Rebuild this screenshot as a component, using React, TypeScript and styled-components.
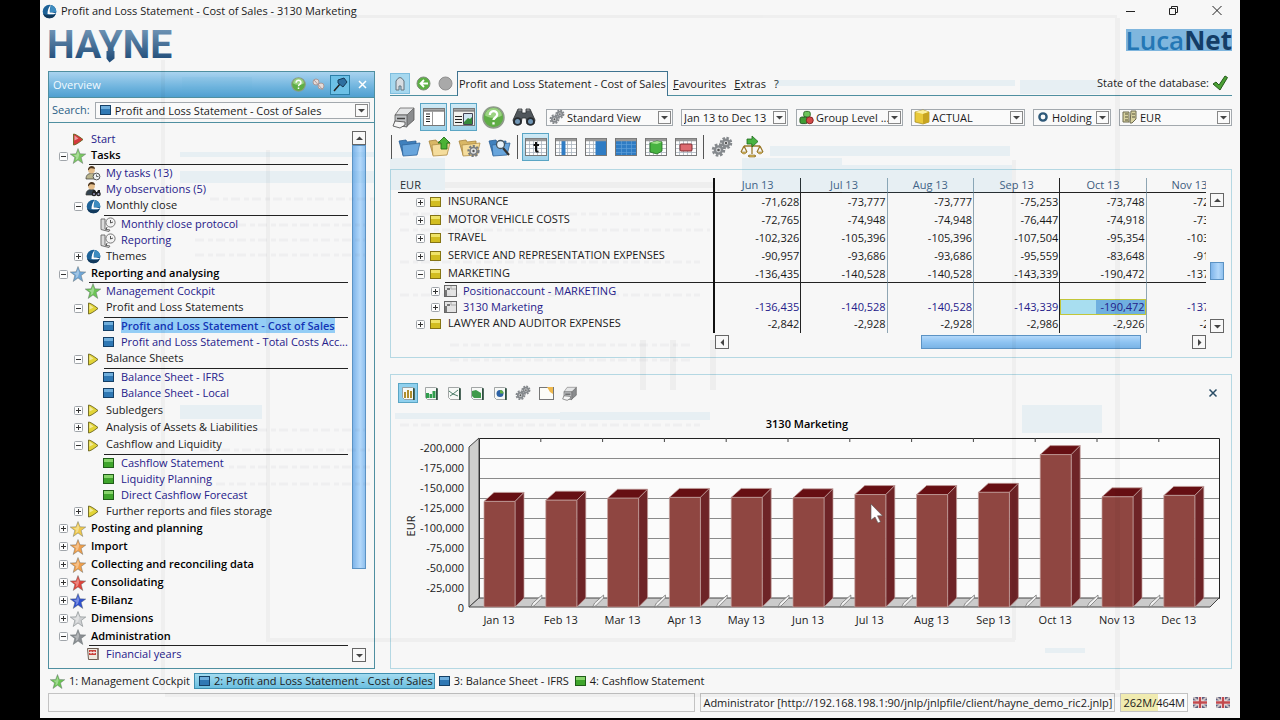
import React from "react";
import styled, { createGlobalStyle, css } from "styled-components";

const GlobalStyle = createGlobalStyle`
  * { box-sizing: border-box; }
  body { margin: 0; background: #000; }
  body, button, select, input {
    font-family: "Open Sans", "Noto Sans", sans-serif;
    font-size: 11px;
    line-height: 16px;
    color: #1a1a1a;
  }
  button { border: 0; padding: 0; background: none; }
  a { color: inherit; text-decoration: none; }
  svg { display: block; flex: none; }
`;

const TEAL = "#4f8fa0";
const PALE = "#b5d8e3";
const LINK = "#25208a";

/* ---------- frame ---------- */

const Stage = styled.div`
  min-height: 100vh;
  padding: 0 40px 2px;
  display: flex;
  background: #000;
`;
const Window = styled.div`
  position: relative;
  flex: 1;
  min-width: 0;
  display: flex;
  flex-direction: column;
  background: #f7f7f7;
`;
const TitleBar = styled.header`
  height: 22px;
  display: flex;
  align-items: center;
  gap: 4px;
  padding: 0 16px 0 2px;
`;
const Title = styled.h1`
  margin: 0;
  flex: 1;
  font-size: 11px;
  font-weight: 400;
`;
const WindowButtons = styled.div`
  display: flex;
  gap: 30px;
`;
const WindowButton = styled.button`
  width: 13px;
  height: 13px;
`;
const BrandRow = styled.div`
  height: 49px;
  display: flex;
  justify-content: space-between;
  align-items: flex-start;
  padding: 7px 8px 0;
`;
const LucaNet = styled.div`
  height: 22px;
  background: #7fb6de;
  color: #2477b5;
  font-size: 26px;
  font-weight: 600;
  line-height: 22px;
  b { color: #143d66; font-weight: 700; }
`;
const Body = styled.main`
  flex: 1;
  display: grid;
  grid-template-columns: 327px minmax(0, 1fr);
  gap: 15px;
  padding: 0 8px;
`;

/* ---------- overview panel ---------- */

const Overview = styled.aside`
  display: flex;
  flex-direction: column;
  border: 1px solid ${TEAL};
`;
const OverviewHead = styled.div`
  height: 26px;
  display: flex;
  align-items: center;
  gap: 4px;
  padding: 0 4px;
  color: #f2faff;
  background: linear-gradient(#a9d3ef, #6fb4de 60%, #4f9fd0);
  border-bottom: 1px solid ${TEAL};
`;
const HeadTitle = styled.h2`
  margin: 0;
  flex: 1;
  font-size: 11px;
  font-weight: 400;
`;
const HeadButton = styled.button<{ $on?: boolean }>`
  width: ${(p) => (p.$on ? 20 : 16)}px;
  height: 20px;
  display: flex;
  align-items: center;
  justify-content: center;
  ${(p) => p.$on && css`border: 1px solid #2b7fa8; background: #6cc0e6;`}
`;
const SearchRow = styled.div`
  height: 25px;
  display: flex;
  align-items: center;
  gap: 5px;
  padding: 0 4px 0 3px;
  color: #2b5f86;
  border-bottom: 1px solid ${TEAL};
`;
const TreeArea = styled.div`
  flex: 1;
  display: flex;
  gap: 4px;
  padding: 8px 8px 6px 0;
`;
const Tree = styled.ul`
  flex: 1;
  min-width: 0;
  margin: 0;
  padding: 0;
  list-style: none;
  display: flex;
  flex-direction: column;
  justify-content: space-between;
`;
const TreeRow = styled.li<{ $level: number; $height: number }>`
  height: ${(p) => p.$height}px;
  display: flex;
  align-items: center;
  padding-left: ${(p) => 10 + p.$level * 15}px;
`;
const Toggle = styled.button`
  width: 9px;
  height: 9px;
  flex: none;
`;
const ToggleSlot = styled.span`
  width: 9px;
  flex: none;
`;
const IconSlot = styled.span`
  width: 16px;
  margin: 0 3px 0 2px;
  display: flex;
  justify-content: center;
  flex: none;
`;
const TreeLabel = styled.span<{ $open?: boolean; $bold?: boolean; $leaf: boolean }>`
  flex: 1;
  min-width: 0;
  height: 100%;
  padding-left: 2px;
  overflow: hidden;
  white-space: nowrap;
  font-weight: ${(p) => (p.$bold ? 600 : 400)};
  color: ${(p) => (p.$leaf ? LINK : p.$bold ? "#000" : "#1a1a1a")};
  border-bottom: ${(p) => (p.$open ? "1px solid #222" : "0")};
`;
const Selected = styled.a`
  font-weight: 600;
  color: #1335b5;
  background: #94cdf5;
`;

/* ---------- scroll bars ---------- */

const VScroll = styled.div`
  width: 14px;
  display: flex;
  flex-direction: column;
  flex: none;
`;
const ScrollButton = styled.button`
  width: 14px;
  height: 14px;
  flex: none;
  border: 1px solid #666;
  background: #f8f8f8;
  display: flex;
  align-items: center;
  justify-content: center;
`;
const VThumb = styled.div<{ $size: number }>`
  flex: ${(p) => p.$size} 0 0;
  border: 1px solid #5c93c4;
  background: linear-gradient(90deg, #7fb5ea, #b3d8fa 60%, #8fc0ee);
`;
const VRest = styled.div<{ $size: number }>`
  flex: ${(p) => p.$size} 0 0;
`;

/* ---------- combo boxes ---------- */

const ComboBox = styled.label<{ $width?: number }>`
  height: 17px;
  ${(p) => (p.$width ? css`width: ${p.$width}px;` : css`flex: 1;`)}
  min-width: 0;
  display: flex;
  align-items: center;
  gap: 2px;
  padding: 0 1px 0 2px;
  border: 1px solid #a3a9ae;
  background: #fafafa;
`;
const ComboSelect = styled.select`
  flex: 1;
  min-width: 0;
  height: 15px;
  padding: 0;
  border: 0;
  line-height: 15px;
  background: transparent;
  appearance: none;
`;
const ComboArrow = styled.span`
  width: 13px;
  height: 13px;
  margin-left: -2px;
  border: 1px solid #888;
  display: flex;
  align-items: center;
  justify-content: center;
  flex: none;
`;

/* ---------- workspace ---------- */

const Workspace = styled.section`
  min-width: 0;
  display: flex;
  flex-direction: column;
`;
const MenuRow = styled.nav`
  height: 25px;
  display: flex;
  align-items: stretch;
`;
const MenuGroup = styled.div<{ $grow?: boolean }>`
  ${(p) => p.$grow && css`flex: 1;`}
  display: flex;
  align-items: center;
  border-bottom: 1px solid ${TEAL};
`;
const NavButtons = styled(MenuGroup)`
  width: 67px;
  gap: 6px;
`;
const RoundButton = styled.button`
  width: 16px;
  height: 16px;
`;
const MarkButton = styled.button`
  width: 20px;
  height: 21px;
  border: 1px solid #7fbede;
  background: #a6d8ef;
  display: flex;
  align-items: center;
  justify-content: center;
`;
const ActiveTab = styled.a`
  width: 211px;
  padding: 4px 0 0 1px;
  white-space: nowrap;
  border: 1px solid #3f7390;
  border-bottom: 0;
`;
const MenuLink = styled.a`
  display: inline-block;
  margin: 0 3px 0 5px;
  padding-top: 1px;
  &::first-letter { text-decoration: underline; }
`;
const MenuHelp = styled.button`
  margin-left: 5px;
  padding-top: 1px;
`;
const DbState = styled.span`
  margin-left: auto;
  display: flex;
  align-items: center;
  gap: 3px;
  padding-right: 4px;
`;
const Toolbar = styled.div<{ $top: number }>`
  height: 28px;
  margin-top: ${(p) => p.$top}px;
  display: flex;
  align-items: center;
  gap: 3px;
`;
const ToolButton = styled.button<{ $on?: boolean }>`
  width: 27px;
  height: 28px;
  flex: none;
  display: flex;
  align-items: center;
  justify-content: center;
  ${(p) => p.$on && css`border: 1px solid #5aa5c4; background: linear-gradient(#cfeaf6, #9fd2ea);`}
`;
const Divider = styled.span`
  width: 1px;
  height: 24px;
  margin: 0 1px;
  background: #555;
`;
const Combos = styled.div`
  flex: 1;
  min-width: 0;
  display: flex;
  gap: 8px;
  margin-left: 6px;
`;

/* ---------- figures table ---------- */

const FiguresPanel = styled.section`
  margin-top: 8px;
  padding: 8px 7px;
  border: 1px solid ${PALE};
`;
const FiguresTop = styled.div`
  display: flex;
  gap: 4px;
`;
const TableClip = styled.div`
  flex: 1;
  min-width: 0;
  overflow: hidden;
`;
const Figures = styled.table`
  width: 835px;
  table-layout: fixed;
  border-collapse: separate;
  border-spacing: 0;
`;
const HeadCell = styled.th<{ $first?: boolean; $dark?: boolean }>`
  height: 15px;
  padding: 0 2px;
  font-weight: 400;
  line-height: 14px;
  text-align: ${(p) => (p.$first ? "left" : "center")};
  color: ${(p) => (p.$first ? "#222" : "#3c5a7d")};
  border-bottom: 1px solid #222;
  border-right: ${(p) => (p.$first ? "2px solid #111" : p.$dark ? "1px solid #222" : "1px solid #8ea5b3")};
`;
const Cell = styled.td<{ $dark?: boolean; $link?: boolean; $line?: boolean; $hit?: boolean; $h: number }>`
  height: ${(p) => p.$h}px;
  padding: 0 1px 0 0;
  line-height: 14px;
  text-align: right;
  color: ${(p) => (p.$link ? LINK : "#1a1a1a")};
  border-right: 1px solid ${(p) => (p.$dark ? "#222" : "#8ea5b3")};
  border-bottom: ${(p) => (p.$line ? "1px solid #222" : "0")};
  ${(p) => p.$hit && css`
    background: linear-gradient(90deg, #a8def0 42%, #6fb0e0 42%);
    box-shadow: inset 0 0 0 1px #c2c63a;
  `}
`;
const NameCell = styled.th<{ $h: number }>`
  height: ${(p) => p.$h}px;
  padding: 0;
  font-weight: 400;
  text-align: left;
  border-right: 2px solid #111;
`;
const NameLine = styled.div<{ $level: number }>`
  height: 100%;
  display: flex;
  align-items: center;
  padding-left: ${(p) => 18 + p.$level * 15}px;
`;
const NameText = styled.span<{ $line?: boolean; $link?: boolean }>`
  flex: 1;
  height: 100%;
  padding-left: 3px;
  line-height: 16px;
  white-space: nowrap;
  color: ${(p) => (p.$link ? LINK : "#1a1a1a")};
  border-bottom: ${(p) => (p.$line ? "1px solid #222" : "0")};
`;
const NameIcon = styled.span`
  width: 18px;
  margin: 0 1px;
  display: flex;
  justify-content: center;
`;
const SideScroll = styled(VScroll)`
  margin-top: 15px;
`;
const HScroll = styled.div`
  height: 14px;
  margin: 2px 18px 0 317px;
  display: flex;
`;
const HRest = styled.div<{ $size: number }>`
  flex: ${(p) => p.$size} 0 0;
`;
const HThumb = styled.div`
  flex: 219 0 0;
  border: 1px solid #5c93c4;
  background: linear-gradient(#b3d8fa, #8fc4f2 50%, #7ab4e6);
`;

/* ---------- chart ---------- */

const ChartPanel = styled.section`
  flex: 1;
  margin-top: 16px;
  border: 1px solid ${PALE};
`;
const ChartTools = styled.div`
  height: 36px;
  display: flex;
  align-items: center;
  gap: 3px;
  padding: 0 12px 0 7px;
`;
const ChartTool = styled.button<{ $on?: boolean }>`
  width: 20px;
  height: 20px;
  display: flex;
  align-items: center;
  justify-content: center;
  ${(p) => p.$on && css`border: 1px solid #5aa5c4; background: #8fd0ee;`}
`;
const ChartClose = styled.button`
  width: 12px;
  height: 12px;
  margin-left: auto;
`;
const ChartTitle = styled.h2`
  margin: 5px 8px 0 0;
  font-size: 11px;
  font-weight: 600;
  color: #000;
  text-align: center;
`;
const ChartSvg = styled.svg`
  width: 100%;
  height: auto;
`;

/* ---------- bottom ---------- */

const OpenTabs = styled.nav`
  height: 24px;
  display: flex;
  align-items: center;
  gap: 2px;
  padding: 0 8px;
`;
const OpenTab = styled.a<{ $on?: boolean }>`
  height: 16px;
  display: flex;
  align-items: center;
  gap: 4px;
  padding: 0 1px;
  line-height: 14px;
  white-space: nowrap;
  border: 1px solid transparent;
  ${(p) => p.$on && css`padding: 0 1px 0 4px; border-color: #3f8fb0; background: linear-gradient(#a3dbf0, #6bbfe0);`}
`;
const StatusBar = styled.footer`
  height: 25px;
  display: flex;
  align-items: flex-start;
  gap: 5px;
  padding: 0 10px 0 8px;
`;
const StatusBox = styled.div<{ $grow?: boolean; $memory?: boolean }>`
  height: 19px;
  padding: 0 2px;
  line-height: 18px;
  white-space: nowrap;
  border: 1px solid #c3c3c3;
  ${(p) => p.$grow && css`flex: 1;`}
  ${(p) => p.$memory && css`background: linear-gradient(90deg, #f0ebb0 56%, #fbfbfb 56%);`}
`;
const Flags = styled.div`
  height: 19px;
  display: flex;
  align-items: center;
  gap: 9px;
`;
const Residue = styled.svg`
  position: absolute;
  inset: 0;
  width: 100%;
  height: 100%;
  pointer-events: none;
`;

/* ---------- icons ---------- */

const Star = ({ c, s = 16 }: { c: string; s?: number }) => (
  <svg width={s} height={s} viewBox="0 0 16 16">
    <path d="M8 .5l2 5.300 5.800.2-4.600 3.500L12.800 15.500 8 12 3.200 15.500l1.600-6L.2 6 6 5.800z" fill={c} stroke="#5a6266" strokeOpacity=".6" strokeWidth=".7" />
    <path d="M8 2.800l1.200 4-1.200 4-2.300 1.400.6-3L3.600 7l2.900-.2z" fill="#fff" opacity=".35" />
  </svg>
);
const Play = ({ c }: { c: string }) => (
  <svg width="14" height="13" viewBox="0 0 14 13">
    <path d="M2.500 1Q5 1 12 6.500 5 12 2.500 12z" fill={c} stroke="#6b6420" strokeWidth=".9" />
    <path d="M3.500 2.500l4 3-4 2z" fill="#fff" opacity=".5" />
  </svg>
);
const Square = ({ c, w = 11 }: { c: "blue" | "green" | "yellow"; w?: number }) => {
  const tones = { blue: ["#7fbbe6", "#2f78b4", "#143f66"], green: ["#9ae07c", "#3fa52c", "#1f5d18"], yellow: ["#f6ec7a", "#d2bd20", "#857414"] }[c];
  return (
    <svg width={w} height="10" viewBox="0 0 11 10">
      <rect x=".5" y=".5" width="10" height="9" fill={tones[1]} stroke={tones[2]} />
      <rect x="1" y="1" width="9" height="3" fill={tones[0]} opacity=".8" />
    </svg>
  );
};
const Luca = () => (
  <svg width="15" height="15" viewBox="0 0 15 15">
    <circle cx="7.500" cy="7.500" r="6.800" fill="#1d6298" />
    <path d="M9 .9A6.800 6.800 0 0 1 14.200 8.500C12 8 9.500 8 8 8.300 8 5.500 8.200 3 9 .9z" fill="#3e8cc0" />
    <path d="M1 9.500A6.800 6.800 0 0 0 13.800 10C9 11.500 4 11.500 1 9.500z" fill="#12395c" />
    <path d="M9 .8C6.500 3.500 5.500 6.500 5.500 10c3 .6 6 .4 8.500-.6C11.500 8.600 9.500 8.500 7.800 8.600 7.600 5.800 8 3 9 .8z" fill="#fff" />
  </svg>
);
const Person = ({ badge }: { badge: "clock" | "binoculars" }) => (
  <svg width="16" height="16" viewBox="0 0 16 16">
    <path d="M1 14c0-4 2-5.500 5.500-5.500S11 10 11 14z" fill={badge === "clock" ? "#b9b48c" : "#33424e"} stroke="#3b3b33" strokeWidth=".7" />
    <circle cx="6.500" cy="5" r="3.400" fill="#e4bd8a" />
    <path d="M3 5c-.3-5 7-5.500 7-1C8 3 6 3 5 3.500 4 4 4 6 3 5z" fill="#4a3520" />
    {badge === "clock" ? (
      <g><circle cx="11.500" cy="11.500" r="3.400" fill="#eef2f5" stroke="#555" /><path d="M11.500 9.500v2h2" fill="none" stroke="#444" strokeWidth=".8" /></g>
    ) : (
      <g fill="#222"><circle cx="9" cy="13" r="2.300" /><circle cx="13.500" cy="13" r="2.300" /><path d="M8 9h2l1 2h1l1-2h2v4H7z" /><circle cx="9" cy="13" r="1" fill="#99b" /><circle cx="13.500" cy="13" r="1" fill="#99b" /></g>
    )}
  </svg>
);
const Protocol = () => (
  <svg width="16" height="15" viewBox="0 0 16 15">
    <path d="M1 2h4v10l5 1-1 1.500-8-2z" fill="#dcdcdc" stroke="#666" strokeWidth=".9" />
    <circle cx="10.500" cy="5.500" r="4.600" fill="#f3f3f3" stroke="#777" />
    <path d="M10.500 3v3l2.500-1M7 10l-1 3" fill="none" stroke="#555" />
  </svg>
);
const Calendar = () => (
  <svg width="14" height="14" viewBox="0 0 14 14">
    <path d="M1.500 1.500h11v11h-10z" fill="#efe9df" stroke="#6d5e54" />
    <path d="M3 3h7v5H3z" fill="#c8413a" /><path d="M5 4v3M8 4v3M3 5.500h7" stroke="#fff" strokeWidth=".8" />
    <path d="M11 2v11l2-1V2z" fill="#8d7f77" />
  </svg>
);
const Help = ({ s }: { s: number }) => (
  <svg width={s} height={s} viewBox="0 0 22 22">
    <circle cx="11" cy="11" r="10" fill="#5fae45" stroke="#8e9b8a" strokeWidth="1.500" />
    <path d="M3 9a8 7 0 0 1 16 0c-4 3-12 3-16 0z" fill="#b6e39c" opacity=".7" />
    <path d="M7.500 8.500c0-5 7.500-4.500 7 0-.3 2.500-3.500 2.500-3.500 5M11 15.500v2.200" fill="none" stroke="#fff" strokeWidth="2.200" />
  </svg>
);
const Arrow = ({ d }: { d: "up" | "down" | "left" | "right" }) => (
  <svg width="7" height="7" viewBox="0 0 7 7">
    <path d={{ up: "M0 5h7L3.500 1.500z", down: "M0 2h7L3.500 5.500z", left: "M5 0v7L1.500 3.500z", right: "M2 0v7l3.500-3.500z" }[d]} fill="#444" />
  </svg>
);
const ToggleBox = ({ open }: { open?: boolean }) => (
  <svg width="9" height="9" viewBox="0 0 9 9">
    <rect x=".5" y=".5" width="8" height="8" rx="1" fill="#fdfdfd" stroke="#a0a5aa" />
    <path d={open ? "M2 4.500h5" : "M2 4.500h5M4.500 2v5"} stroke="#333" />
  </svg>
);
const Gears = ({ s = 22 }: { s?: number }) => (
  <svg width={s} height={s} viewBox="0 0 22 22" fill="none">
    <circle cx="7.500" cy="14" r="5.500" stroke="#85898d" strokeWidth="2.500" strokeDasharray="2.600 1.700" />
    <circle cx="7.500" cy="14" r="3.600" fill="#d3d6d8" stroke="#85898d" strokeWidth="2.400" />
    <circle cx="7.500" cy="14" r="1.300" fill="#555" />
    <circle cx="15" cy="7" r="5" stroke="#85898d" strokeWidth="2.500" strokeDasharray="2.400 1.500" />
    <circle cx="15" cy="7" r="3.300" fill="#e0e2e4" stroke="#85898d" strokeWidth="2.400" />
    <circle cx="15" cy="7" r="1.200" fill="#555" />
  </svg>
);
const Printer = ({ s = 23 }: { s?: number }) => (
  <svg width={s} height={s} viewBox="0 0 23 23">
    <path d="M14 9l8-7v12l-8 7z" fill="#8a8c8e" stroke="#555" strokeWidth=".8" />
    <path d="M8 2h14l-7 7H3z" fill="#e4e5e6" stroke="#666" strokeWidth=".8" />
    <path d="M3 9h12v12l-12-2z" fill="#bfc1c3" stroke="#555" strokeWidth=".8" />
    <path d="M5 12.500h8" stroke="#444" strokeWidth="1.500" />
    <path d="M3 15l10 1v3l-5 3-7-2z" fill="#f6f6f6" stroke="#555" strokeWidth=".9" />
  </svg>
);
const Folder = ({ c = "blue", mark }: { c?: "blue" | "tan"; mark?: "up" | "gear" | "lens" }) => (
  <svg width="23" height="22" viewBox="0 0 23 22">
    <path d="M1 5l7-1 1 2 9-1v5L5 19z" fill={c === "blue" ? "#3f80bd" : "#d9b765"} stroke={c === "blue" ? "#2b5f95" : "#a8843c"} strokeWidth=".8" />
    <path d="M4 9l18-2-3 12-14 1z" fill={c === "blue" ? "#68a5dc" : "#f5dd9d"} stroke={c === "blue" ? "#2f659c" : "#b08d45"} strokeWidth=".8" />
    {mark === "up" && <path d="M16 1l6 6h-3v6h-6V7h-3z" fill="#4cb235" stroke="#23701a" strokeWidth=".9" />}
    {mark === "gear" && <g fill="none"><circle cx="15.500" cy="15" r="5" stroke="#777b7f" strokeWidth="2.200" strokeDasharray="2.200 1.500" /><circle cx="15.500" cy="15" r="3.500" fill="#dfe1e3" stroke="#777b7f" strokeWidth="1.500" /><circle cx="15.500" cy="15" r="1.200" fill="#555" /></g>}
    {mark === "lens" && <g><path d="M15 12l6 7" stroke="#333" strokeWidth="2.200" /><circle cx="12.500" cy="8.500" r="4" fill="#e8f3fb" stroke="#44545f" strokeWidth="1.300" /></g>}
  </svg>
);
const Grid = ({ kind }: { kind: "t" | "column" | "half" | "full" | "cube" | "cell" }) => (
  <svg width="22" height="20" viewBox="0 0 22 20">
    <rect x=".5" y="1.500" width="21" height="17" fill="#fdfdfd" stroke="#777" />
    <path d="M1 7.500h20M1 11.500h20M1 15.500h20M4.500 4v14M8.500 4v14M12.500 4v14M16.500 4v14" stroke="#a9b4be" strokeWidth=".8" />
    {kind === "column" && <path d="M6.500 3h4v15h-4z" fill="#2f7cc4" />}
    {kind === "half" && <path d="M10.500 3H21v15H10.500z" fill="#2f7cc4" />}
    {kind === "full" && <path d="M1 3h20v15H1z" fill="#2f7cc4" />}
    {kind === "full" && <path d="M1 7.500h20M1 11.500h20M1 15.500h20M6.500 4v14M11.500 4v14M16.500 4v14" stroke="#5f9fd8" strokeWidth=".7" />}
    <path d="M1 3h20" stroke="#999" strokeWidth="2.500" />
    {kind === "t" && <path d="M11 5v8.500q0 1.500 2.500 1M8.500 8H14" fill="none" stroke="#111" strokeWidth="2" />}
    {kind === "cube" && <g><path d="M5 6l7-2 5 1v9l-5 3-7-2z" fill="#48b341" stroke="#1f6b1d" strokeWidth=".8" /><path d="M5 6l7 1 5-2-5-1z" fill="#a3e28f" /></g>}
    {kind === "cell" && <rect x="5" y="7" width="12" height="7" rx="1" fill="#dd6a70" stroke="#7d2a2e" />}
  </svg>
);
const PaneIcon = ({ picture }: { picture?: boolean }) => (
  <svg width="22" height="20" viewBox="0 0 22 20">
    <rect x=".5" y="1.500" width="21" height="17" fill={picture ? "#f2f2ee" : "#fff"} stroke="#777" />
    <path d="M1 3.500h20" stroke="#888" strokeWidth="2.500" />
    <path d={picture ? "M2 9.500h7M2 12.500h7M2 15.500h7" : "M3 7h4M3 9.500h4M3 12h4M3 14.500h4"} stroke="#222" strokeWidth="1.200" />
    {picture ? <g><path d="M10.500 6.500h9v11h-9z" fill="#cfe4f1" stroke="#445" /><path d="M11 15l4-4 2 1 2-2v7h-8z" fill="#358a3c" /></g> : <path d="M9.500 4v14" stroke="#999" />}
  </svg>
);
const Binoculars = () => (
  <svg width="24" height="22" viewBox="0 0 24 22">
    <path d="M6 3h4v4h4V3h4l5 11-1 4h-7l-1-6h-4l-1 6H2l-1-4z" fill="#50565b" stroke="#2a2d30" strokeWidth=".8" />
    <circle cx="5.500" cy="15.500" r="4.300" fill="#272b2f" /><circle cx="18.500" cy="15.500" r="4.300" fill="#272b2f" />
    <circle cx="5.500" cy="15.500" r="2.500" fill="#7196b5" /><circle cx="18.500" cy="15.500" r="2.500" fill="#7196b5" />
    <path d="M6.500 4h3M14.500 4h3" stroke="#aaa" />
  </svg>
);
const Scales = () => (
  <svg width="24" height="24" viewBox="0 0 24 24" fill="none">
    <path d="M12 8v11M4 11h16M8 21h8M4 11L1 17M4 11l3 6M20 11l-3 6M20 11l3 6" stroke="#9b7a2c" strokeWidth="1.300" />
    <path d="M1 17h6q-3 4-6 0zM17 17h6q-3 4-6 0zM9 20h6v2H9z" fill="#d8b95e" stroke="#8b6b22" strokeWidth=".6" />
    <path d="M7 4h5V1l6 5.500-6 5.500V9H7z" fill="#48b341" stroke="#1f6b1d" strokeWidth=".8" />
  </svg>
);
const Cubes = () => (
  <svg width="15" height="15" viewBox="0 0 16 15">
    <rect x="5" y="1" width="7" height="6" rx="2" fill="#6cc45a" stroke="#2c6b25" />
    <rect x="1" y="7" width="8" height="7" rx="2" fill="#3f9d35" stroke="#24551f" />
    <circle cx="11.500" cy="10.500" r="3.700" fill="#d34a48" stroke="#7d2322" />
  </svg>
);
const YellowCube = () => (
  <svg width="16" height="16" viewBox="0 0 16 16">
    <path d="M1 3l8-2 6 2v10l-6 2-8-2z" fill="#e9c93a" stroke="#9c8420" strokeWidth=".7" />
    <path d="M1 3l8 2 6-2-6-2z" fill="#fbf0a0" /><path d="M9 5l6-2v10l-6 2z" fill="#c7a421" />
  </svg>
);
const Ring = () => (
  <svg width="14" height="12" viewBox="0 0 14 12"><circle cx="7" cy="6" r="3.600" fill="none" stroke="#2d5878" strokeWidth="2.400" /></svg>
);
const Money = () => (
  <svg width="16" height="14" viewBox="0 0 16 14">
    <path d="M1 2h6v10H1zM9 1h5v8l-4 4H8z" fill="#d8d2a0" stroke="#6d6a50" /><path d="M3 4h3M3 7h3M3 10h3M10 4h3M10 7h3" stroke="#55523d" />
  </svg>
);
const ChartIcon = ({ kind }: { kind: "bars" | "bars2" | "line" | "area" | "pie" | "note" }) => (
  <svg width="15" height="15" viewBox="0 0 15 15">
    {kind === "note" ? (
      <g><rect x=".5" y="1.500" width="14" height="12" fill="#fdfdf8" stroke="#777" /><path d="M8 1h6v7l-3-2z" fill="#f0b94c" /></g>
    ) : (
      <g>
        <path d="M1.500 1.500h10l2 1v11h-10l-2-2z" fill="#f7f9f7" stroke="#8b9191" strokeWidth=".8" />
        <path d="M12 2v12h1.700V2.500z" fill="#2f5141" />
        {kind === "bars" && <path d="M3 6h2v6H3zM6 4h2v8H6zM9 5h2v7H9z" fill="#b08e2c" />}
        {kind === "bars2" && <path d="M2 7h3v5H2zM5.500 8H8v4H5.500zM8.500 5h3v7h-3z" fill="#2f9d4d" />}
        {kind === "line" && <path d="M2 5l4 3 5-4M3 10l3-2 5 2" fill="none" stroke="#4b7d69" />}
        {kind === "area" && <path d="M2 5l4-1 5 3v5H4L2 10z" fill="#3f9a4a" />}
        {kind === "pie" && <g><circle cx="7" cy="7.500" r="3.500" fill="#2d62a5" /><path d="M7 7.500V4a3.500 3.500 0 0 1 3.500 3.500z" fill="#5fae45" /></g>}
      </g>
    )}
  </svg>
);
const AccountIcon = () => (
  <svg width="13" height="12" viewBox="0 0 13 12">
    <rect x=".5" y=".5" width="12" height="11" fill="#e3e3e3" stroke="#666" /><path d="M1 5h2v6H1zM3 3h3v2H3z" fill="#777" /><path d="M7 1v3h5" stroke="#aaa" fill="none" />
  </svg>
);
const Flag = () => (
  <svg width="14" height="11" viewBox="0 0 14 11">
    <rect width="14" height="11" fill="#5b5f80" /><path d="M0 0l14 11M14 0L0 11" stroke="#c9bfc0" strokeWidth="2" />
    <path d="M7 0v11M0 5.500h14" stroke="#f4eeee" strokeWidth="4" /><path d="M7 0v11M0 5.500h14" stroke="#c24a4e" strokeWidth="2.400" />
  </svg>
);

/* ---------- data ---------- */

type Node = { t: string; l: number; i: React.ReactNode; kind: "leaf" | "open" | "closed"; sel?: boolean };
const leaf = (l: number, i: React.ReactNode, t: string, sel?: boolean): Node => ({ t, l, i, kind: "leaf", sel });
const open = (l: number, i: React.ReactNode, t: string): Node => ({ t, l, i, kind: "open" });
const shut = (l: number, i: React.ReactNode, t: string): Node => ({ t, l, i, kind: "closed" });
const rowHeight = (n: Node) => {
  if (n.kind === "leaf") return 16;
  if (n.kind === "open") return n.l === 1 ? 19 : 18;
  return n.l === 1 ? 17 : 18;
};
const blue = <Square c="blue" />;
const green = <Square c="green" />;
const yellowPlay = <Play c="#e2d437" />;

const tree: Node[] = [
  leaf(0, <Play c="#d6383c" />, "Start"),
  open(0, <Star c="#7bc862" />, "Tasks"),
  leaf(1, <Person badge="clock" />, "My tasks (13)"),
  leaf(1, <Person badge="binoculars" />, "My observations (5)"),
  open(1, <Luca />, "Monthly close"),
  leaf(2, <Protocol />, "Monthly close protocol"),
  leaf(2, <Protocol />, "Reporting"),
  shut(1, <Luca />, "Themes"),
  open(0, <Star c="#6fa6d6" />, "Reporting and analysing"),
  leaf(1, <Star c="#6cc455" />, "Management Cockpit"),
  open(1, yellowPlay, "Profit and Loss Statements"),
  leaf(2, blue, "Profit and Loss Statement - Cost of Sales", true),
  leaf(2, blue, "Profit and Loss Statement - Total Costs Acc..."),
  open(1, yellowPlay, "Balance Sheets"),
  leaf(2, blue, "Balance Sheet - IFRS"),
  leaf(2, blue, "Balance Sheet - Local"),
  shut(1, yellowPlay, "Subledgers"),
  shut(1, yellowPlay, "Analysis of Assets & Liabilities"),
  open(1, yellowPlay, "Cashflow and Liquidity"),
  leaf(2, green, "Cashflow Statement"),
  leaf(2, green, "Liquidity Planning"),
  leaf(2, green, "Direct Cashflow Forecast"),
  shut(1, yellowPlay, "Further reports and files storage"),
  shut(0, <Star c="#efc94e" />, "Posting and planning"),
  shut(0, <Star c="#f0a04c" />, "Import"),
  shut(0, <Star c="#f0a04c" />, "Collecting and reconciling data"),
  shut(0, <Star c="#e0443a" />, "Consolidating"),
  shut(0, <Star c="#2f50cf" />, "E-Bilanz"),
  shut(0, <Star c="#cfd1d3" />, "Dimensions"),
  open(0, <Star c="#8b8f93" />, "Administration"),
  leaf(1, <Calendar />, "Financial years"),
];

const columns = ["Jun 13", "Jul 13", "Aug 13", "Sep 13", "Oct 13", "Nov 13"];
const darkColumn = (i: number) => i === 0 || i === 3;
type Row = { name: string; kind: "closed" | "open" | "child"; v: string[] };
const rows: Row[] = [
  { name: "INSURANCE", kind: "closed", v: ["-71,628", "-73,777", "-73,777", "-75,253", "-73,748", "-72,302"] },
  { name: "MOTOR VEHICLE COSTS", kind: "closed", v: ["-72,765", "-74,948", "-74,948", "-76,447", "-74,918", "-73,449"] },
  { name: "TRAVEL", kind: "closed", v: ["-102,326", "-105,396", "-105,396", "-107,504", "-95,354", "-103,288"] },
  { name: "SERVICE AND REPRESENTATION EXPENSES", kind: "closed", v: ["-90,957", "-93,686", "-93,686", "-95,559", "-83,648", "-91,812"] },
  { name: "MARKETING", kind: "open", v: ["-136,435", "-140,528", "-140,528", "-143,339", "-190,472", "-137,718"] },
  { name: "Positionaccount - MARKETING", kind: "child", v: ["", "", "", "", "", ""] },
  { name: "3130 Marketing", kind: "child", v: ["-136,435", "-140,528", "-140,528", "-143,339", "-190,472", "-137,718"] },
  { name: "LAWYER AND AUDITOR EXPENSES", kind: "closed", v: ["-2,842", "-2,928", "-2,928", "-2,986", "-2,926", "-2,870"] },
];

const months = ["Jan 13", "Feb 13", "Mar 13", "Apr 13", "May 13", "Jun 13", "Jul 13", "Aug 13", "Sep 13", "Oct 13", "Nov 13", "Dec 13"];
const amounts = [132000, 133500, 136000, 137000, 137000, 136435, 140528, 140528, 143339, 190472, 137700, 139500];

function Combo({ label, value, icon, width }: { label: string; value: string; icon?: React.ReactNode; width?: number }) {
  return (
    <ComboBox $width={width}>
      {icon}
      <ComboSelect aria-label={label} defaultValue={value}>
        <option>{value}</option>
      </ComboSelect>
      <ComboArrow><Arrow d="down" /></ComboArrow>
    </ComboBox>
  );
}

function Chart() {
  const left = 78, base = 175, step = 61.8, unit = 160 / 200000;
  return (
    <ChartSvg viewBox="0 0 840 210" role="img" aria-label="3130 Marketing by month">
      <path d="M88.500 6.500H828.500V166.500H88.500z" fill="#fbfbfb" stroke="#222" />
      {[1, 2, 3, 4, 5, 6, 7].map((i) => <path key={i} d={`M89 ${6.5 + i * 20}H828`} stroke="#8a8a8a" />)}
      <path d={`M${left} 15L88 6V166L${left} ${base}z`} fill="#cfcfcd" stroke="#444" />
      <path d={`M${left} ${base}L88 166H828L819 ${base}z`} fill="#cbcbcb" stroke="#444" />
      {months.slice(1).map((m, i) => {
        const x = left + (i + 1) * step;
        return (
          <g key={m}>
            <path d={`M${x + 10} 6v4`} stroke="#444" />
            <path d={`M${x} ${base}l2-4 9-8v3l-8 8z`} fill="#f2f2f2" stroke="#777" strokeWidth=".8" />
          </g>
        );
      })}
      {amounts.map((a, i) => {
        const x = 93 + i * step;
        const top = base - a * unit;
        return (
          <g key={months[i]} stroke="#c3a09e" strokeWidth=".7">
            <path d={`M${x} ${top}l10-9h30l-9 9z`} fill="#660f13" />
            <path d={`M${x + 31} ${top}l9-9V${base - 9}l-9 9z`} fill="#6e2427" />
            <path d={`M${x} ${top}h31V${base}h-31z`} fill="#8f4641" />
          </g>
        );
      })}
      <g fill="#1a1a1a" fontSize="11">
        {[200, 175, 150, 125, 100, 75, 50, 25, 0].map((n, i) => (
          <text key={n} x="73" y={20 + i * 20} textAnchor="end">{n ? `-${n},000` : "0"}</text>
        ))}
        {months.map((m, i) => (
          <text key={m} x={108 + i * step} y="192" textAnchor="middle">{m}</text>
        ))}
        <text transform="translate(24 94) rotate(-90)" textAnchor="middle">EUR</text>
      </g>
      <path d="M480 72v16l4-3 3 6 2.500-1.200-3-6h5z" fill="#fff" stroke="#555" strokeWidth=".6" />
    </ChartSvg>
  );
}

export default function App() {
  return (
    <Stage>
      <GlobalStyle />
      <Window>
        <TitleBar>
          <Luca />
          <Title>Profit and Loss Statement - Cost of Sales - 3130 Marketing</Title>
          <WindowButtons>
            <WindowButton aria-label="Minimize"><svg width="13" height="13"><path d="M1 6.500h9" stroke="#222" /></svg></WindowButton>
            <WindowButton aria-label="Restore"><svg width="13" height="13" fill="none" stroke="#222"><path d="M1.500 3.500h6v6h-6zM3.500 3.500v-2h6v6h-2" /></svg></WindowButton>
            <WindowButton aria-label="Close"><svg width="13" height="13" stroke="#222"><path d="M1.500 1l9 9M10.500 1l-9 9" /></svg></WindowButton>
          </WindowButtons>
        </TitleBar>
        <BrandRow>
          <svg width="130" height="36" viewBox="0 0 130 36">
            <defs>
              <linearGradient id="hayne" gradientUnits="userSpaceOnUse" x1="0" y1="0" x2="0" y2="30"><stop offset="0" stopColor="#6f94b5" /><stop offset="1" stopColor="#24507c" /></linearGradient>
            </defs>
            <text x="-1" y="29" fontFamily="Roboto, sans-serif" fontSize="39" fontWeight="700" fill="url(#hayne)">HAYNE</text>
            <path d="M58.500 22H66.500v7.500l-5 4-3-4z" fill="url(#hayne)" />
          </svg>
          <LucaNet>Luca<b>Net</b></LucaNet>
        </BrandRow>

        <Body>
          <Overview>
            <OverviewHead>
              <HeadTitle>Overview</HeadTitle>
              <HeadButton aria-label="Help"><Help s={15} /></HeadButton>
              <HeadButton aria-label="Link">
                <svg width="15" height="15" viewBox="0 0 15 15" fill="#e6dcd8" stroke="#a99"><circle cx="5" cy="5" r="3" /><circle cx="10" cy="9" r="3" /><path d="M3 3l9 10" /></svg>
              </HeadButton>
              <HeadButton $on aria-label="Pin">
                <svg width="15" height="15" viewBox="0 0 15 15"><path d="M1 14l6-7" stroke="#222" strokeWidth="1.500" /><path d="M5 3l6-2 3 4-4 5-5-4z" fill="#2f6fa0" stroke="#173a57" /></svg>
              </HeadButton>
              <HeadButton aria-label="Close overview">
                <svg width="9" height="9" stroke="#fff" strokeWidth="1.500"><path d="M1 1l7 7M8 1L1 8" /></svg>
              </HeadButton>
            </OverviewHead>
            <SearchRow>
              <span>Search:</span>
              <Combo label="Search" value="Profit and Loss Statement - Cost of Sales" icon={<Square c="blue" w={15} />} />
            </SearchRow>
            <TreeArea>
              <Tree>
                {tree.map((n) => (
                  <TreeRow key={n.t} $level={n.l} $height={rowHeight(n)}>
                    {n.kind === "leaf" ? <ToggleSlot /> : <Toggle aria-label={`Toggle ${n.t}`}><ToggleBox open={n.kind === "open"} /></Toggle>}
                    <IconSlot>{n.i}</IconSlot>
                    <TreeLabel $leaf={n.kind === "leaf"} $open={n.kind === "open"} $bold={n.l === 0 && n.kind !== "leaf"}>
                      {n.sel ? <Selected href="#statement">{n.t}</Selected> : <a href="#item">{n.t}</a>}
                    </TreeLabel>
                  </TreeRow>
                ))}
              </Tree>
              <VScroll>
                <ScrollButton aria-label="Scroll up"><Arrow d="up" /></ScrollButton>
                <VThumb $size={424} />
                <VRest $size={79} />
                <ScrollButton aria-label="Scroll down"><Arrow d="down" /></ScrollButton>
              </VScroll>
            </TreeArea>
          </Overview>

          <Workspace>
            <MenuRow>
              <NavButtons>
                <MarkButton aria-label="Overview panel">
                  <svg width="12" height="15" viewBox="0 0 12 15"><path d="M2 14V5q4-7 8 0v9H7v-4H5v4z" fill="#d7dde2" stroke="#66747f" /></svg>
                </MarkButton>
                <RoundButton aria-label="Back">
                  <svg width="15" height="15" viewBox="0 0 15 15"><circle cx="7.500" cy="7.500" r="6.500" fill="#5cb043" stroke="#7d8c79" /><path d="M12 7.500H5M8 4L4.500 7.500 8 11" fill="none" stroke="#fff" strokeWidth="1.800" /></svg>
                </RoundButton>
                <RoundButton aria-label="Forward">
                  <svg width="15" height="15" viewBox="0 0 15 15"><circle cx="7.500" cy="7.500" r="6.500" fill="#a9a9a9" stroke="#8f8f8f" /></svg>
                </RoundButton>
              </NavButtons>
              <ActiveTab href="#statement">Profit and Loss Statement - Cost of Sales</ActiveTab>
              <MenuGroup $grow>
                <MenuLink href="#favourites">Favourites</MenuLink>
                <MenuLink href="#extras">Extras</MenuLink>
                <MenuHelp>?</MenuHelp>
                <DbState>
                  State of the database:
                  <svg width="16" height="16" viewBox="0 0 16 16"><path d="M1 9l3-2 3 3 6-9 2.500 1.500L8 15z" fill="#4ba035" stroke="#245a1a" /></svg>
                </DbState>
              </MenuGroup>
            </MenuRow>

            <Toolbar $top={7}>
              <ToolButton aria-label="Print"><Printer /></ToolButton>
              <ToolButton $on aria-label="Show list"><PaneIcon /></ToolButton>
              <ToolButton $on aria-label="Show chart"><PaneIcon picture /></ToolButton>
              <ToolButton aria-label="Help"><Help s={23} /></ToolButton>
              <ToolButton aria-label="Find"><Binoculars /></ToolButton>
              <Combos>
                <Combo label="View" value="Standard View" icon={<Gears s={16} />} width={127} />
                <Combo label="Period" value="Jan 13 to Dec 13" width={107} />
                <Combo label="Level" value="Group Level ..." icon={<Cubes />} width={107} />
                <Combo label="Data" value="ACTUAL" icon={<YellowCube />} width={114} />
                <Combo label="Entity" value="Holding" icon={<Ring />} width={78} />
                <Combo label="Currency" value="EUR" icon={<Money />} />
              </Combos>
            </Toolbar>
            <Toolbar $top={2}>
              <Divider />
              <ToolButton aria-label="Open"><Folder /></ToolButton>
              <ToolButton aria-label="Export"><Folder c="tan" mark="up" /></ToolButton>
              <ToolButton aria-label="Folder settings"><Folder c="tan" mark="gear" /></ToolButton>
              <ToolButton aria-label="Search folder"><Folder mark="lens" /></ToolButton>
              <Divider />
              <ToolButton $on aria-label="Text"><Grid kind="t" /></ToolButton>
              <ToolButton aria-label="Column"><Grid kind="column" /></ToolButton>
              <ToolButton aria-label="Columns"><Grid kind="half" /></ToolButton>
              <ToolButton aria-label="All columns"><Grid kind="full" /></ToolButton>
              <ToolButton aria-label="Cube"><Grid kind="cube" /></ToolButton>
              <ToolButton aria-label="Cell"><Grid kind="cell" /></ToolButton>
              <Divider />
              <ToolButton aria-label="Settings"><Gears /></ToolButton>
              <ToolButton aria-label="Reconcile"><Scales /></ToolButton>
            </Toolbar>

            <FiguresPanel>
              <FiguresTop>
                <TableClip>
                  <Figures>
                    <colgroup>
                      <col style={{ width: 317 }} />
                      {columns.map((c) => <col key={c} />)}
                    </colgroup>
                    <thead>
                      <tr>
                        <HeadCell $first scope="col">EUR</HeadCell>
                        {columns.map((c, i) => <HeadCell key={c} scope="col" $dark={darkColumn(i)}>{c}</HeadCell>)}
                      </tr>
                    </thead>
                    <tbody>
                      {rows.map((r) => {
                        const child = r.kind === "child";
                        const h = child ? 16 : 18;
                        return (
                          <tr key={r.name}>
                            <NameCell scope="row" $h={h}>
                              <NameLine $level={child ? 1 : 0}>
                                <Toggle aria-label={`Toggle ${r.name}`}><ToggleBox open={r.kind === "open"} /></Toggle>
                                <NameIcon>{child ? <AccountIcon /> : <Square c="yellow" />}</NameIcon>
                                <NameText $link={child} $line={r.kind === "open"}>{r.name}</NameText>
                              </NameLine>
                            </NameCell>
                            {r.v.map((v, i) => (
                              <Cell key={columns[i]} $h={h} $dark={darkColumn(i)} $link={child} $line={r.kind === "open"} $hit={r.name === "3130 Marketing" && i === 4}>{v}</Cell>
                            ))}
                          </tr>
                        );
                      })}
                    </tbody>
                  </Figures>
                </TableClip>
                <SideScroll>
                  <ScrollButton aria-label="Scroll up"><Arrow d="up" /></ScrollButton>
                  <VRest $size={56} />
                  <VThumb $size={17} />
                  <VRest $size={40} />
                  <ScrollButton aria-label="Scroll down"><Arrow d="down" /></ScrollButton>
                </SideScroll>
              </FiguresTop>
              <HScroll>
                <ScrollButton aria-label="Scroll left"><Arrow d="left" /></ScrollButton>
                <HRest $size={193} />
                <HThumb />
                <HRest $size={51} />
                <ScrollButton aria-label="Scroll right"><Arrow d="right" /></ScrollButton>
              </HScroll>
            </FiguresPanel>

            <ChartPanel>
              <ChartTools>
                <ChartTool $on aria-label="Column chart"><ChartIcon kind="bars" /></ChartTool>
                <ChartTool aria-label="Bar chart"><ChartIcon kind="bars2" /></ChartTool>
                <ChartTool aria-label="Line chart"><ChartIcon kind="line" /></ChartTool>
                <ChartTool aria-label="Area chart"><ChartIcon kind="area" /></ChartTool>
                <ChartTool aria-label="Pie chart"><ChartIcon kind="pie" /></ChartTool>
                <ChartTool aria-label="Chart settings"><Gears s={16} /></ChartTool>
                <ChartTool aria-label="Note"><ChartIcon kind="note" /></ChartTool>
                <ChartTool aria-label="Print chart"><Printer s={15} /></ChartTool>
                <ChartClose aria-label="Close chart"><svg width="12" height="12" stroke="#2a4d66" strokeWidth="1.500"><path d="M2.500 2.500l7 7M9.500 2.500l-7 7" /></svg></ChartClose>
              </ChartTools>
              <ChartTitle>3130 Marketing</ChartTitle>
              <Chart />
            </ChartPanel>
          </Workspace>
        </Body>

        <OpenTabs>
          <OpenTab href="#cockpit"><Star c="#6cc455" s={15} />1: Management Cockpit</OpenTab>
          <OpenTab href="#statement" $on>{blue}2: Profit and Loss Statement - Cost of Sales</OpenTab>
          <OpenTab href="#balance">{blue}3: Balance Sheet - IFRS</OpenTab>
          <OpenTab href="#cashflow">{green}4: Cashflow Statement</OpenTab>
        </OpenTabs>
        <StatusBar>
          <StatusBox $grow />
          <StatusBox>Administrator [http://192.168.198.1:90/jnlp/jnlpfile/client/hayne_demo_ric2.jnlp]</StatusBox>
          <StatusBox $memory>262M/464M</StatusBox>
          <Flags><Flag /><Flag /></Flags>
        </StatusBar>

        <Residue viewBox="40 0 1200 718" preserveAspectRatio="none" aria-hidden="true">
          <g fill="#000" opacity=".03">
            <path d="M165 15h952v3H165zM1115 18h5v672h-5zM161 60h4v630h-4zM266 150h4v490h-4zM266 638h749v4H266zM1012 160h4v480h-4zM165 693h955v4H165z" />
            <path d="M445 182h270v6H445zM640 340h6v50h-6zM670 340h6v50h-6zM710 340h6v50h-6z" />
          </g>
          <g fill="#5fb4dc" opacity=".1">
            <path d="M182 77h70v14h-70zM180 152h195v5H180zM180 171h195v12H180zM180 405h82v14h-82zM390 158h55v32h-55zM742 158h100v34h-100zM842 165h170v28h-170zM1020 80h80v14h-80zM1022 405h80v28h-80zM775 80h240v6H775zM770 146h240v10H770zM395 413h170v6H395zM560 412h150v8H560zM1045 648h40v5h-40z" />
          </g>
          <g fill="none" stroke="#667" strokeWidth="3" opacity=".05" strokeDasharray="9 4 5 3">
            <path d="M210 199h165M195 225h170M195 240h170M195 255h170M400 214h300M400 230h310M400 262h300M400 295h300M450 345h240M450 360h240M400 425h300M195 430h170M200 450h170M195 467h175M195 484h175" />
          </g>
        </Residue>
      </Window>
    </Stage>
  );
}
